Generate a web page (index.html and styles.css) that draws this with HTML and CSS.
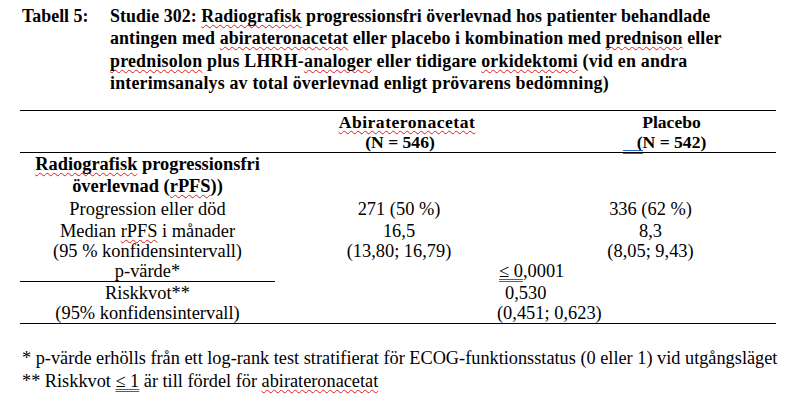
FILE: index.html
```html
<!DOCTYPE html>
<html lang="sv">
<head>
<meta charset="utf-8">
<title>Tabell 5</title>
<link rel="stylesheet" href="styles.css">
</head>
<body>
<div class="page">
  <div class="caption">
    <div class="cap-label">Tabell 5:</div>
    <div class="cap-text">
      <div class="l1">Studie 302: <span class="sp">Radiografisk</span> progressionsfri överlevnad hos patienter behandlade</div>
      <div class="l2">antingen med <span class="sp">abirateronacetat</span> eller placebo i kombination med <span class="sp">prednison</span> eller</div>
      <div class="l3"><span class="sp">prednisolon</span> plus LHRH-<span class="sp">analoger</span> eller tidigare <span class="sp">orkidektomi</span> (vid en andra</div>
      <div class="l4">interimsanalys av total överlevnad enligt prövarens bedömning)</div>
    </div>
  </div>

  <div class="table">
    <div class="row head">
      <div class="cell"></div>
      <div class="cell h2"><span class="sp">Abirateronacetat</span><br><span class="n546">(N = 546)</span></div>
      <div class="cell h3">Placebo<br><span class="n542"><span class="dbl"></span>(N = 542)</span></div>
    </div>

    <div class="row section">
      <div class="cell"><span class="sp">Radiografisk</span> progressionsfri<br>överlevnad (<span class="sp">rPFS</span>))</div>
      <div class="cell"></div>
      <div class="cell"></div>
    </div>

    <div class="row pad2">
      <div class="cell">Progression eller död</div>
      <div class="cell c2">271 (50 %)</div>
      <div class="cell">336 (62 %)</div>
    </div>

    <div class="row pad2">
      <div class="cell">Median <span class="sp">rPFS</span> i månader<br>(95 % konfidensintervall)</div>
      <div class="cell c2">16,5<br>(13,80; 16,79)</div>
      <div class="cell">8,3<br>(8,05; 9,43)</div>
    </div>

    <div class="row">
      <div class="cell ruled">p-värde*</div>
      <div class="cell span"><span class="pv"><span class="blu">≤ 0</span>,0001</span></div>
    </div>

    <div class="row pad1">
      <div class="cell">Riskkvot**<br>(95% konfidensintervall)</div>
      <div class="cell span"><span class="rk1">0,530</span><span class="rk2">(0,451; 0,623)</span></div>
    </div>
  </div>

  <div class="notes">
    <p>* p-värde erhölls från ett log-rank test stratifierat för ECOG-funktionsstatus (0 eller 1) vid utgångsläget</p>
    <p>** Riskkvot <span class="blu">≤ 1</span> är till fördel för <span class="sp">abirateronacetat</span></p>
  </div>
</div>
</body>
</html>
```

FILE: styles.css
```css
html, body {
  margin: 0;
  padding: 0;
  background: #ffffff;
}

body {
  font-family: "Liberation Serif", "Times New Roman", serif;
  color: #000000;
}

.page {
  width: 802px;
  height: 404px;
  overflow: hidden;
}

.caption {
  display: flex;
  padding: 5px 0 0 22px;
  font-weight: bold;
  font-size: 17.9px;
  line-height: 22.3px;
  white-space: nowrap;
}

.cap-label {
  width: 88px;
  flex: none;
}

.l1 {
  letter-spacing: 0.07px;
}

.l2 {
  letter-spacing: 0.1px;
}

.l3 {
  letter-spacing: 0.2px;
}

.l4 {
  letter-spacing: 0.18px;
}

.sp {
  text-decoration: underline wavy #e01b1b;
  text-decoration-thickness: 1px;
  text-underline-offset: 2px;
  text-decoration-skip-ink: none;
}

.blu {
  text-decoration: underline double #2d5fd0;
  text-decoration-thickness: 1px;
  text-underline-offset: 2px;
  text-decoration-skip-ink: none;
}

.table {
  margin: 16px 0 0 20px;
  width: 756px;
  border-top: 1px solid #000;
  border-bottom: 1px solid #000;
  font-size: 18.4px;
  line-height: 20px;
  white-space: nowrap;
}

.row {
  display: grid;
  grid-template-columns: 255px 250px 251px;
}

.cell {
  text-align: center;
}

.head {
  padding-top: 2px;
  border-bottom: 1px solid #000;
  font-weight: bold;
  font-size: 17.6px;
  line-height: 19.5px;
}

.h2 .sp {
  letter-spacing: 0.5px;
  margin-left: 14px;
}

.h3 {
  padding-left: 42px;
}

.n542 {
  position: relative;
}

.dbl {
  position: absolute;
  left: -14px;
  bottom: -2px;
  width: 20px;
  height: 2px;
  border-top: 1px solid #2d5fd0;
  border-bottom: 1px solid #2d5fd0;
}

.section {
  font-weight: bold;
  line-height: 22px;
}

.pad2 {
  padding-top: 2px;
}

.pad1 {
  padding-top: 1px;
}

.c2 {
  padding-right: 2px;
}

.ruled {
  border-bottom: 1px solid #000;
}

.span {
  grid-column: 2 / 4;
  display: flex;
  flex-direction: column;
  align-items: flex-start;
}

.pv {
  margin-left: 224px;
}

.rk1 {
  margin-left: 230px;
}

.rk2 {
  margin-left: 222px;
}

.notes {
  margin: 23px 0 0 22px;
  font-size: 18.3px;
  line-height: 23px;
  white-space: nowrap;
}

.notes p {
  margin: 0;
}
```
